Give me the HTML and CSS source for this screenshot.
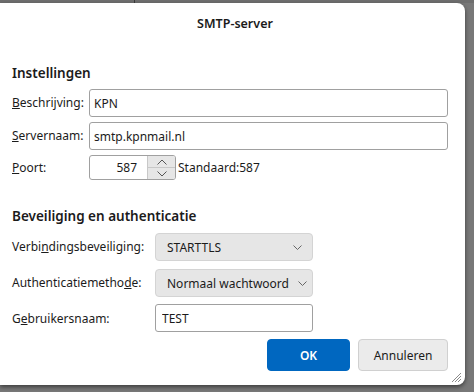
FILE: index.html
```html
<!DOCTYPE html>
<html lang="nl">
<head>
    <meta charset="UTF-8">
    <meta name="viewport" content="width=device-width, initial-scale=1.0">
    <title>SMTP-server</title>
    <link rel="stylesheet" href="styles.css">
</head>
<body>
    <div class="topbar"><span class="topbar-left"></span></div>
    <div class="dialog">
        <div class="title">SMTP-server</div>

        <h2 class="section-title first">Instellingen</h2>
        <div class="form-grid">
            <label for="desc"><u>B</u>eschrijving:</label>
            <input id="desc" class="text-input" type="text" value="KPN">

            <label for="server"><u>S</u>ervernaam:</label>
            <input id="server" class="text-input" type="text" value="smtp.kpnmail.nl">

            <label for="port"><u>P</u>oort:</label>
            <div class="port-row">
                <div class="spinner">
                    <span class="spinner-value">587</span>
                    <div class="spinner-buttons">
                        <span class="spin-btn">
                            <svg width="10" height="6" viewBox="0 0 10 6"><path d="M0.5 5.5 L5 1 L9.5 5.5" fill="none" stroke="#555" stroke-width="1"/></svg>
                        </span>
                        <span class="spin-btn">
                            <svg width="10" height="6" viewBox="0 0 10 6"><path d="M0.5 0.5 L5 5 L9.5 0.5" fill="none" stroke="#555" stroke-width="1"/></svg>
                        </span>
                    </div>
                </div>
                <span class="default-port">Standaard:587</span>
            </div>
        </div>

        <h2 class="section-title second">Beveiliging en authenticatie</h2>
        <div class="form-grid security">
            <label>Verbi<u>n</u>dingsbeveiliging:</label>
            <div class="select">
                <span>STARTTLS</span>
                <svg class="chevron" width="9" height="5" viewBox="0 0 9 5"><path d="M0.5 0.5 L4.5 4.5 L8.5 0.5" fill="none" stroke="#666" stroke-width="1"/></svg>
            </div>

            <label>Authenticatiemetho<u>d</u>e:</label>
            <div class="select tight">
                <span>Normaal wachtwoord</span>
                <svg class="chevron" width="9" height="5" viewBox="0 0 9 5"><path d="M0.5 0.5 L4.5 4.5 L8.5 0.5" fill="none" stroke="#666" stroke-width="1"/></svg>
            </div>

            <label for="user">G<u>e</u>bruikersnaam:</label>
            <input id="user" class="text-input user" type="text" value="TEST">
        </div>

        <div class="actions">
            <button class="btn primary">OK</button>
            <button class="btn">Annuleren</button>
        </div>

        <svg class="grip" width="11" height="11" viewBox="0 0 11 11">
            <path d="M10 1 L1 10 M10 4 L4 10 M10 7 L7 10" stroke="#8a8a8a" stroke-width="1"/>
        </svg>
    </div>
</body>
</html>
```
FILE: styles.css
```css
body {
    margin: 0;
    height: 392px;
    overflow: hidden;
    background-color: #787878;
    font-family: 'Noto Sans', 'Open Sans', sans-serif;
    font-size: 12px;
    color: #1b1b1b;
}
.topbar {
    height: 3px;
    background-color: #6e6e6e;
    display: flex;
}
.topbar-left {
    width: 134px;
    border-right: 1px solid #3c3c3c;
}
.dialog {
    position: relative;
    width: 465px;
    height: 382px;
    box-sizing: border-box;
    padding: 0 17px 0 12px;
    background-color: #fff;
    border-radius: 0 8px 8px 0;
    box-shadow: 0 2px 4px rgba(0, 0, 0, 0.5);
}
.title {
    height: 42px;
    line-height: 42px;
    text-align: center;
    font-weight: 600;
    font-size: 12.5px;
    padding-left: 10px;
}
.section-title {
    margin: 0;
    height: 20px;
    line-height: 20px;
    font-size: 13.5px;
    font-weight: 600;
}
.section-title.first {
    margin-top: 18px;
    margin-bottom: 6px;
}
.section-title.second {
    margin-top: 26px;
    margin-bottom: 7px;
}
.form-grid {
    display: grid;
    grid-template-columns: 77px 1fr;
    row-gap: 5px;
    align-items: center;
}
.form-grid label {
    line-height: 18px;
    white-space: nowrap;
}
.text-input {
    height: 28px;
    box-sizing: border-box;
    margin: 0;
    padding: 0 4px;
    border: 1px solid #a0a0a0;
    border-radius: 3px;
    font-family: inherit;
    font-size: 12px;
    color: #1b1b1b;
}
.port-row {
    display: flex;
    align-items: center;
}
.spinner {
    display: flex;
    width: 87px;
    height: 25px;
    box-sizing: border-box;
    border: 1px solid #a0a0a0;
    border-radius: 3px;
    overflow: hidden;
}
.spinner-value {
    flex: 1;
    text-align: right;
    padding-right: 10px;
    line-height: 23px;
}
.spinner-buttons {
    width: 27px;
    display: flex;
    flex-direction: column;
    border-left: 1px solid #c8c8c8;
}
.spin-btn {
    flex: 1;
    display: flex;
    align-items: center;
    justify-content: center;
    background-color: #e6e6e6;
}
.spin-btn + .spin-btn {
    border-top: 1px solid #c8c8c8;
}
.default-port {
    margin-left: 2px;
}
.form-grid.security {
    grid-template-columns: 143px 158px;
    row-gap: 8px;
}
.select {
    height: 28px;
    box-sizing: border-box;
    display: flex;
    align-items: center;
    justify-content: space-between;
    padding: 0 10px 0 11px;
    background-color: #e6e6e6;
    border: 1px solid #d4d4d4;
    border-radius: 4px;
    white-space: nowrap;
}
.select.tight {
    padding-right: 5px;
}
.text-input.user {
    padding-left: 6px;
    margin-top: -1px;
}
.actions {
    display: flex;
    justify-content: flex-end;
    gap: 8px;
    margin-top: 7px;
}
.btn {
    height: 32px;
    width: 90px;
    margin: 0;
    border: 1px solid #d0d0d0;
    border-radius: 4px;
    background-color: #ebebeb;
    font-family: inherit;
    font-size: 12px;
    color: #1b1b1b;
}
.btn.primary {
    width: 83px;
    border-color: #0067c0;
    background-color: #0067c0;
    color: #fff;
    font-weight: 600;
}
.grip {
    position: absolute;
    right: 3px;
    bottom: 2px;
}
```
